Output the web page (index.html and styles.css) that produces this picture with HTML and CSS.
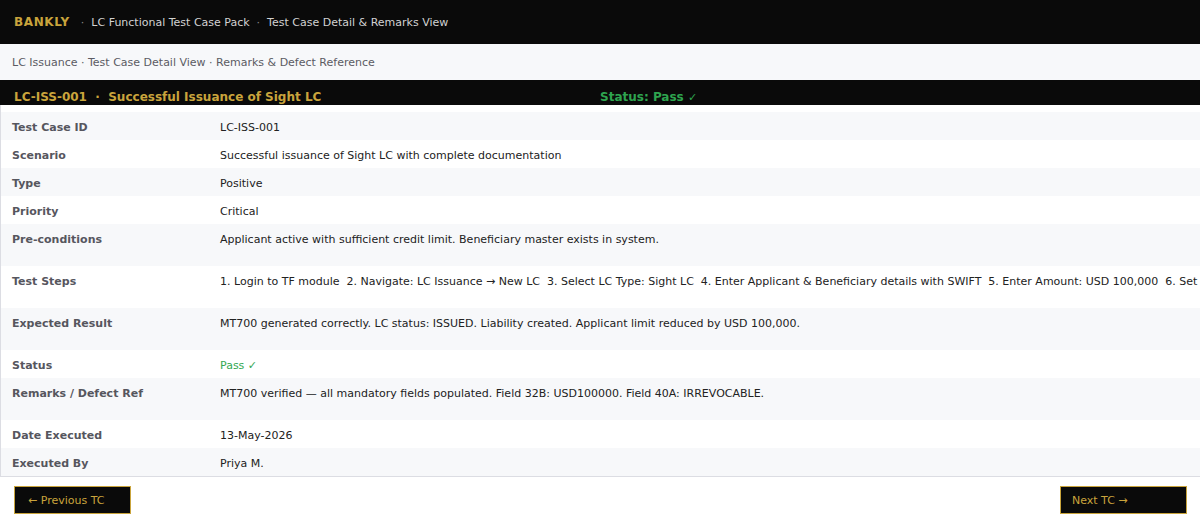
FILE: index.html
```html
<!DOCTYPE html>
<html lang="en">
<head>
<meta charset="utf-8">
<title>BANKLY · LC Functional Test Case Pack</title>
<link rel="stylesheet" href="styles.css">
</head>
<body>
<header class="topbar">
  <span class="brand">BANKLY</span>
  <span class="sep">·</span>
  <span class="crumb">LC Functional Test Case Pack</span>
  <span class="sep">·</span>
  <span class="crumb">Test Case Detail &amp; Remarks View</span>
</header>
<nav class="subbar">LC Issuance · Test Case Detail View · Remarks &amp; Defect Reference</nav>
<section class="titlebar">
  <div class="tc-title">LC-ISS-001  ·  Successful Issuance of Sight LC</div>
  <div class="tc-status">Status: Pass <span class="tick">✓</span></div>
</section>
<div class="detail">
  <div class="row"><div class="label">Test Case ID</div><div class="value">LC-ISS-001</div></div>
  <div class="row"><div class="label">Scenario</div><div class="value">Successful issuance of Sight LC with complete documentation</div></div>
  <div class="row"><div class="label">Type</div><div class="value">Positive</div></div>
  <div class="row"><div class="label">Priority</div><div class="value">Critical</div></div>
  <div class="row tall"><div class="label">Pre-conditions</div><div class="value">Applicant active with sufficient credit limit. Beneficiary master exists in system.</div></div>
  <div class="row tall"><div class="label">Test Steps</div><div class="value">1. Login to TF module  2. Navigate: LC Issuance → New LC  3. Select LC Type: Sight LC  4. Enter Applicant &amp; Beneficiary details with SWIFT  5. Enter Amount: USD 100,000  6. Set Expiry Date and Documents Required  7. Submit for Authorization  8. Authorize LC</div></div>
  <div class="row tall"><div class="label">Expected Result</div><div class="value">MT700 generated correctly. LC status: ISSUED. Liability created. Applicant limit reduced by USD 100,000.</div></div>
  <div class="row"><div class="label">Status</div><div class="value pass">Pass <span class="tick">✓</span></div></div>
  <div class="row tall"><div class="label">Remarks / Defect Ref</div><div class="value">MT700 verified — all mandatory fields populated. Field 32B: USD100000. Field 40A: IRREVOCABLE.</div></div>
  <div class="row"><div class="label">Date Executed</div><div class="value">13-May-2026</div></div>
  <div class="row"><div class="label">Executed By</div><div class="value">Priya M.</div></div>
</div>
<footer class="actions">
  <button class="btn btn-prev" type="button">← Previous TC</button>
  <button class="btn btn-next" type="button">Next TC →</button>
</footer>
</body>
</html>
```
FILE: styles.css
```css
html, body {
  margin: 0;
  padding: 0;
  background: #ffffff;
  overflow: hidden;
}
body {
  font-family: "DejaVu Sans", "Liberation Sans", sans-serif;
  font-size: 11px;
  color: #222;
  width: 1200px;
}
.topbar {
  height: 44px;
  background: #0a0a0a;
  display: flex;
  align-items: center;
  padding: 0 14px;
  box-sizing: border-box;
  color: #cfcfcf;
}
.brand {
  color: #c9a43c;
  font-weight: bold;
  font-size: 12px;
  letter-spacing: 0.6px;
  margin-right: 4px;
}
.sep {
  color: #8a8a8a;
  margin: 0 7px;
}
.crumb {
  color: #d2d2d2;
  font-size: 11px;
}
.subbar {
  height: 36px;
  background: #f7f8fa;
  display: flex;
  align-items: center;
  padding: 0 12px;
  color: #5b5b63;
  font-size: 11px;
}
.titlebar {
  height: 25px;
  background: #0a0a0a;
  display: grid;
  grid-template-columns: 600px 1fr;
  box-sizing: border-box;
  padding-top: 10px;
  line-height: 14px;
  font-weight: bold;
  font-size: 12px;
  overflow: hidden;
}
.tc-title {
  color: #c9a43c;
  padding-left: 14px;
  white-space: pre;
}
.tc-status {
  color: #2ea44f;
}
.tick {
  font-weight: normal;
  font-size: 11px;
}
.detail {
  padding-top: 7px;
  border-left: 1px solid #dcdde3;
  border-bottom: 1px solid #dcdde3;
  overflow: hidden;
}
.row {
  display: grid;
  grid-template-columns: 219px 1fr;
  height: 28px;
  box-sizing: border-box;
  padding-top: 9px;
  line-height: 14px;
}
.row:nth-child(odd) {
  background: #f7f8fa;
}
.row.tall {
  height: 42px;
}
.label {
  padding-left: 11px;
  font-weight: bold;
  color: #56565e;
}
.value {
  color: #222;
  white-space: pre;
}
.value.pass {
  color: #34a853;
}
.actions {
  display: flex;
  justify-content: space-between;
  padding: 9px 13px 0 14px;
}
.btn {
  height: 28px;
  background: #0a0a0a;
  border: 1px solid #c9a43c;
  color: #c9a43c;
  font-family: "DejaVu Sans", "Liberation Sans", sans-serif;
  font-size: 11px;
  text-align: left;
  padding: 0;
  box-sizing: border-box;
  cursor: pointer;
}
.btn-prev {
  width: 117px;
  padding-left: 13px;
}
.btn-next {
  width: 127px;
  padding-left: 11px;
}
```
